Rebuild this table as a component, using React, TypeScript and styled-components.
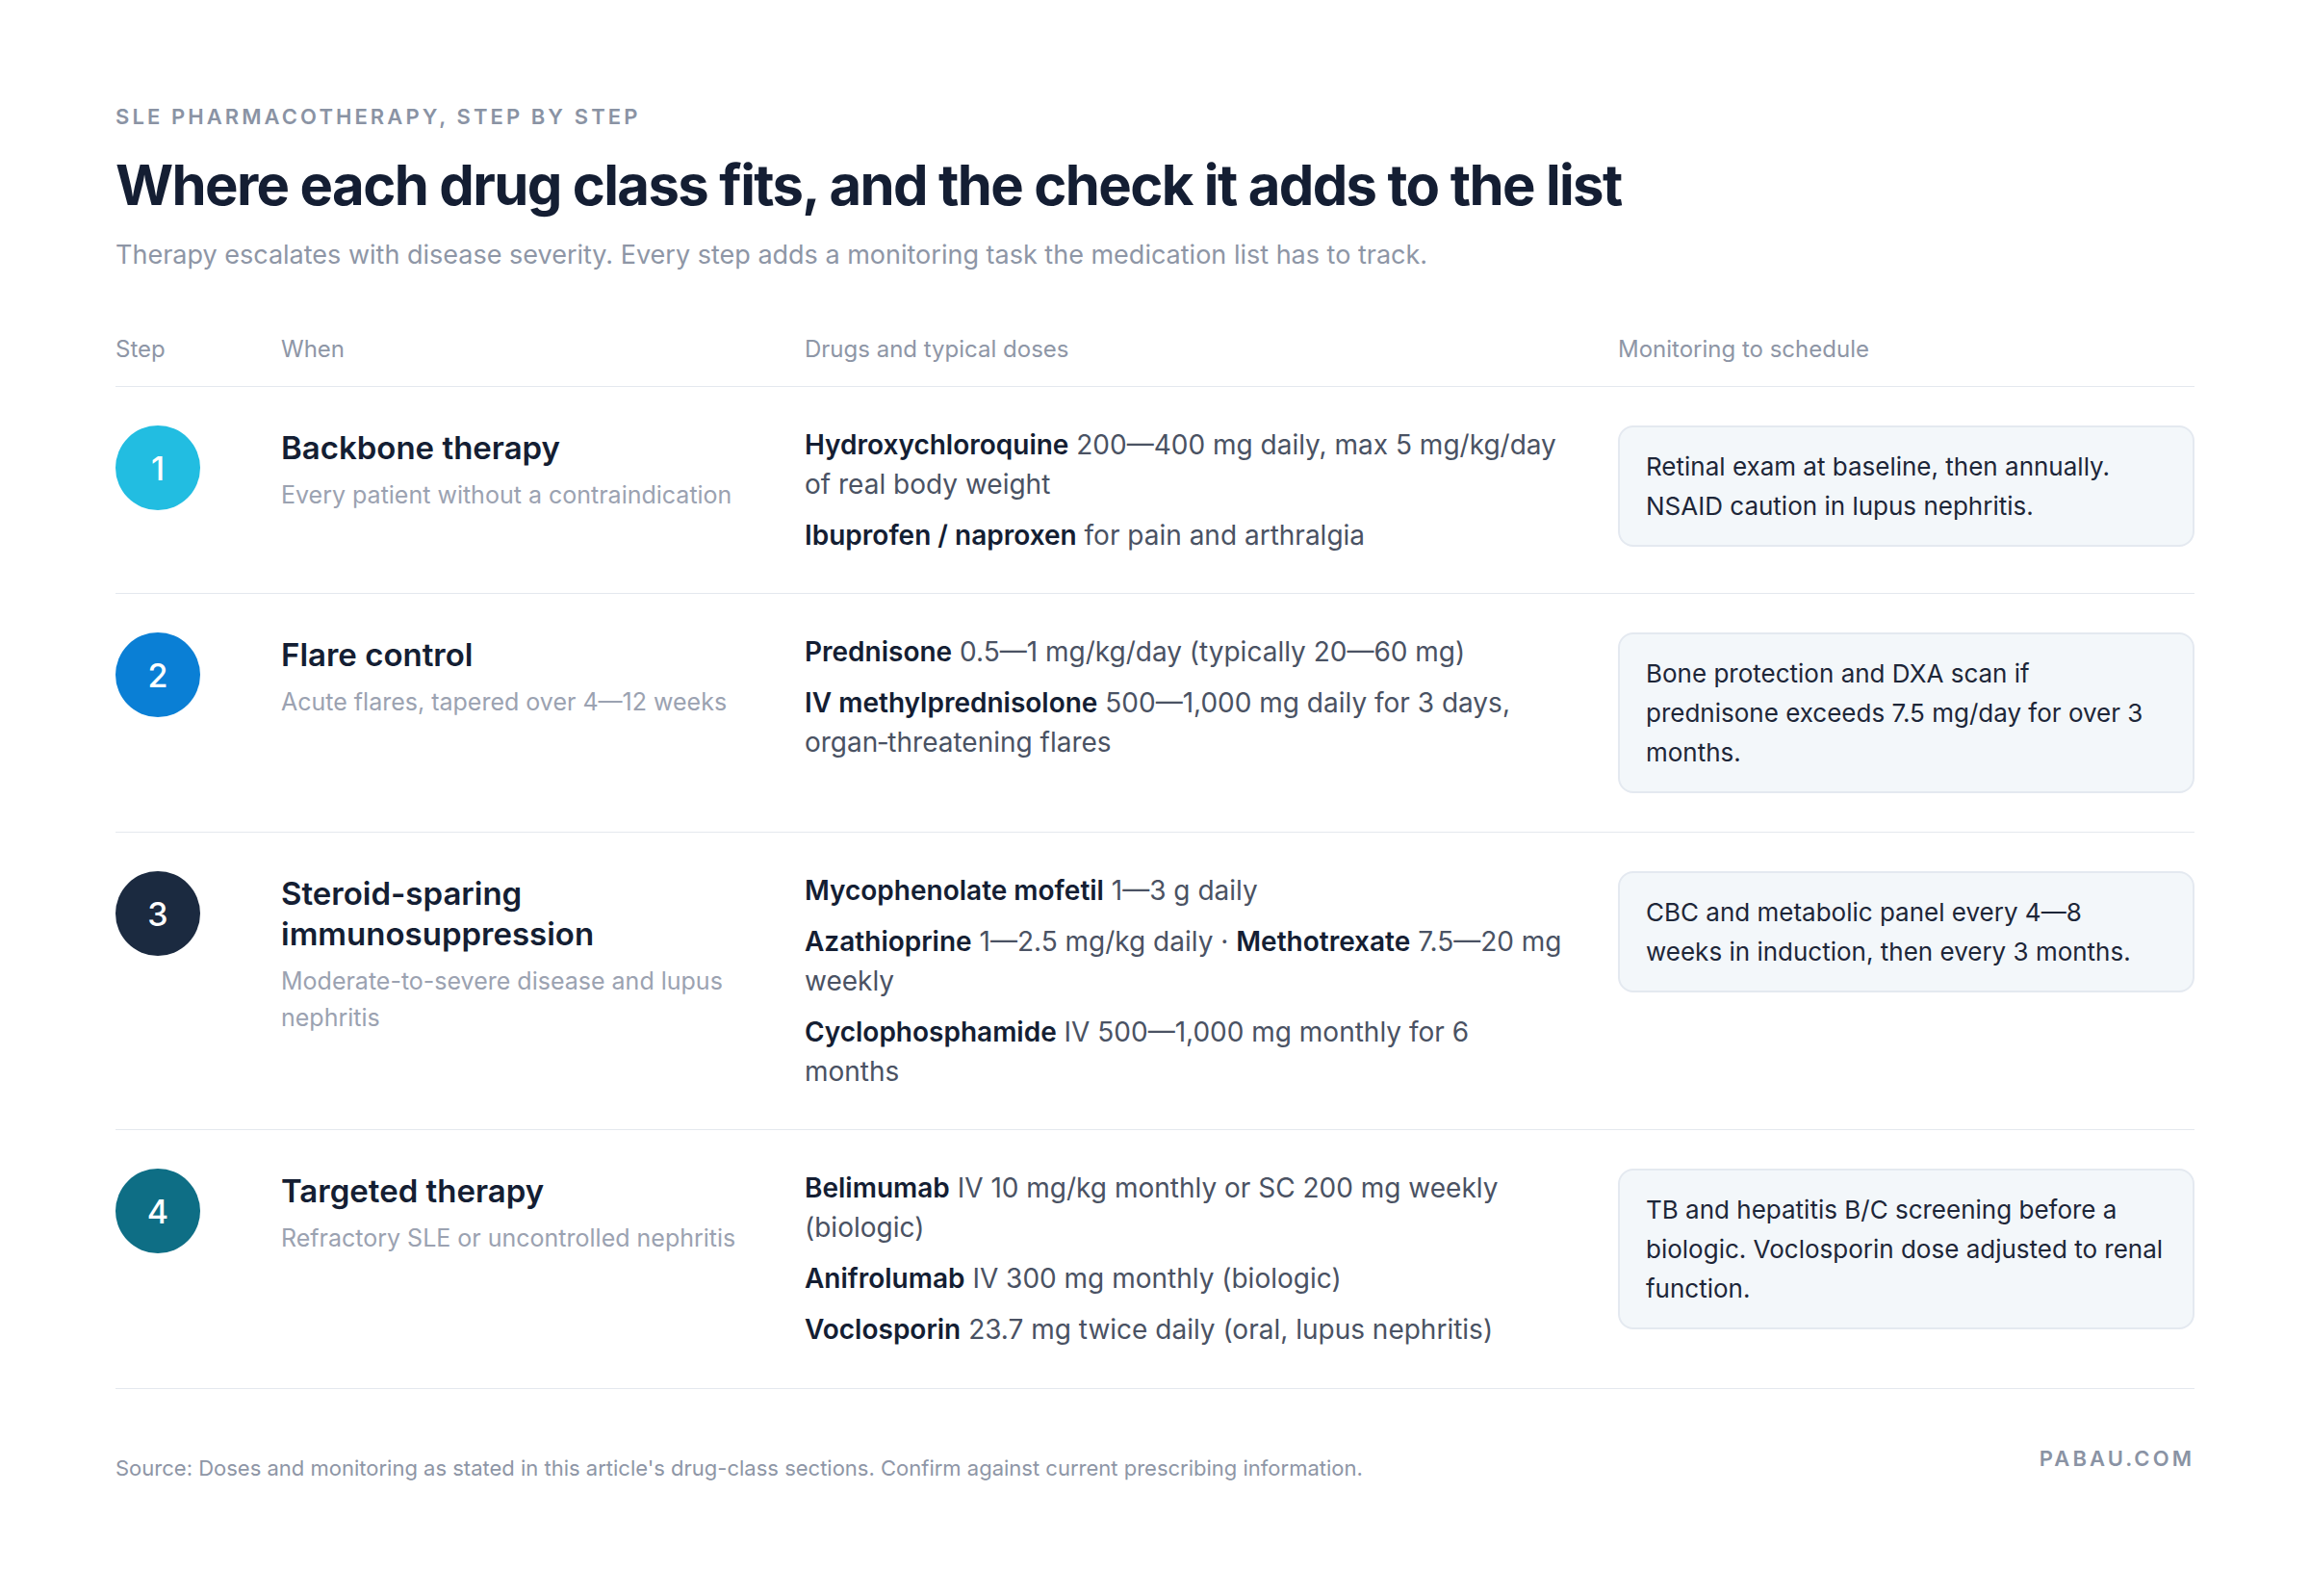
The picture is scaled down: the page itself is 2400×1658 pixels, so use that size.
import React from "react";
import styled, { createGlobalStyle } from "styled-components";

const GlobalStyle = createGlobalStyle`
  html, body { margin: 0; padding: 0; background: #ffffff; }
  body { font-family: Inter, "Noto Sans", sans-serif; -webkit-font-smoothing: antialiased; }
  * { box-sizing: border-box; }
`;

const Page = styled.main`
  width: 2400px;
  min-height: 1658px;
  padding: 107px 120px 0;
  background: #ffffff;
  color: #141e33;
`;

const Eyebrow = styled.div`
  font-size: 22px;
  line-height: 28px;
  font-weight: 600;
  letter-spacing: 0.14em;
  text-transform: uppercase;
  color: #8a93a4;
`;

const Title = styled.h1`
  margin: 23px 0 0;
  font-size: 58px;
  line-height: 68px;
  font-weight: 700;
  letter-spacing: -0.028em;
  color: #141e33;
`;

const Subtitle = styled.p`
  margin: 20px 0 0;
  font-size: 27px;
  line-height: 38px;
  font-weight: 400;
  color: #8e96a6;
`;

const Table = styled.section`
  margin-top: 63px;
`;

const Grid = styled.div`
  display: grid;
  grid-template-columns: 172px 544px 845px 1fr;
  border-bottom: 1px solid #e4e8ee;
`;

const HeadRow = styled(Grid)`
  padding-bottom: 22px;
`;

const HeadCell = styled.div`
  font-size: 24px;
  line-height: 32px;
  color: #8e96a6;
`;

const Row = styled(Grid)`
  padding: 40px 0;
  align-items: start;
`;

const Badge = styled.div<{ $bg: string }>`
  width: 88px;
  height: 88px;
  border-radius: 50%;
  background: ${(p) => p.$bg};
  color: #ffffff;
  display: flex;
  align-items: center;
  justify-content: center;
  font-size: 34px;
  font-weight: 500;
`;

const When = styled.div`
  padding-right: 44px;
  padding-top: 2px;
`;

const StepTitle = styled.h2`
  margin: 0;
  font-size: 33px;
  line-height: 42px;
  font-weight: 600;
  color: #141e33;
`;

const StepNote = styled.p`
  margin: 9px 0 0;
  font-size: 25px;
  line-height: 38px;
  font-weight: 400;
  color: #9ba2b1;
`;

const Drugs = styled.div`
  max-width: 790px;
  display: flex;
  flex-direction: column;
  gap: 12px;
`;

const DrugLine = styled.p`
  margin: 0;
  font-size: 28px;
  line-height: 40.8px;
  color: #4a5263;
`;

const DrugName = styled.strong`
  font-weight: 600;
  color: #141e33;
`;

const Monitor = styled.div<{ $balance?: boolean }>`
  background: #f3f7fa;
  border: 2px solid #e4e9f0;
  border-radius: 16px;
  padding: 20px 27px;
  font-size: 26px;
  line-height: 41px;
  color: #1d2638;
  text-wrap: ${(p) => (p.$balance ? "balance" : "wrap")};
`;

const Footer = styled.footer`
  display: flex;
  justify-content: space-between;
  align-items: flex-start;
  padding-top: 57px;
`;

const Source = styled.p`
  margin: 10px 0 0;
  font-size: 22px;
  line-height: 30px;
  color: #8e96a6;
`;

const Brand = styled.div`
  font-size: 22px;
  line-height: 30px;
  font-weight: 600;
  letter-spacing: 0.14em;
  color: #8a93a4;
`;

type Drug = { name: string; rest: React.ReactNode };
type Step = {
  n: number;
  color: string;
  title: string;
  note: string;
  drugs: Drug[][];
  monitor: string;
  balance?: boolean;
};

const steps: Step[] = [
  {
    n: 1,
    color: "#22bde1",
    title: "Backbone therapy",
    note: "Every patient without a contraindication",
    drugs: [
      [{ name: "Hydroxychloroquine", rest: " 200—400 mg daily, max 5 mg/kg/day of real body weight" }],
      [{ name: "Ibuprofen / naproxen", rest: " for pain and arthralgia" }],
    ],
    monitor: "Retinal exam at baseline, then annually. NSAID caution in lupus nephritis.",
  },
  {
    n: 2,
    color: "#0a7fd5",
    title: "Flare control",
    note: "Acute flares, tapered over 4—12 weeks",
    drugs: [
      [{ name: "Prednisone", rest: " 0.5—1 mg/kg/day (typically 20—60 mg)" }],
      [{ name: "IV methylprednisolone", rest: " 500—1,000 mg daily for 3 days, organ\u2011threatening flares" }],
    ],
    monitor: "Bone protection and DXA scan if prednisone exceeds 7.5 mg/day for over 3 months.",
  },
  {
    n: 3,
    color: "#1b2a40",
    title: "Steroid-sparing immunosuppression",
    note: "Moderate-to-severe disease and lupus nephritis",
    drugs: [
      [{ name: "Mycophenolate mofetil", rest: " 1—3 g daily" }],
      [
        { name: "Azathioprine", rest: " 1—2.5 mg/kg daily · " },
        { name: "Methotrexate", rest: " 7.5—20 mg weekly" },
      ],
      [{ name: "Cyclophosphamide", rest: " IV 500—1,000 mg monthly for 6 months" }],
    ],
    monitor: "CBC and metabolic panel every 4—8 weeks in induction, then every 3 months.",
    balance: true,
  },
  {
    n: 4,
    color: "#0e6e85",
    title: "Targeted therapy",
    note: "Refractory SLE or uncontrolled nephritis",
    drugs: [
      [{ name: "Belimumab", rest: " IV 10 mg/kg monthly or SC 200 mg weekly (biologic)" }],
      [{ name: "Anifrolumab", rest: " IV 300 mg monthly (biologic)" }],
      [{ name: "Voclosporin", rest: " 23.7 mg twice daily (oral, lupus nephritis)" }],
    ],
    monitor: "TB and hepatitis B/C screening before a biologic. Voclosporin dose adjusted to renal function.",
  },
];

export default function App() {
  return (
    <>
      <GlobalStyle />
      <Page>
        <Eyebrow>SLE pharmacotherapy, step by step</Eyebrow>
        <Title>Where each drug class fits, and the check it adds to the list</Title>
        <Subtitle>
          Therapy escalates with disease severity. Every step adds a monitoring task the medication list has to track.
        </Subtitle>
        <Table>
          <HeadRow>
            <HeadCell>Step</HeadCell>
            <HeadCell>When</HeadCell>
            <HeadCell>Drugs and typical doses</HeadCell>
            <HeadCell>Monitoring to schedule</HeadCell>
          </HeadRow>
          {steps.map((s) => (
            <Row key={s.n}>
              <Badge $bg={s.color}>{s.n}</Badge>
              <When>
                <StepTitle>{s.title}</StepTitle>
                <StepNote>{s.note}</StepNote>
              </When>
              <Drugs>
                {s.drugs.map((line, i) => (
                  <DrugLine key={i}>
                    {line.map((d) => (
                      <React.Fragment key={d.name}>
                        <DrugName>{d.name}</DrugName>
                        {d.rest}
                      </React.Fragment>
                    ))}
                  </DrugLine>
                ))}
              </Drugs>
              <Monitor $balance={s.balance}>{s.monitor}</Monitor>
            </Row>
          ))}
        </Table>
        <Footer>
          <Source>
            Source: Doses and monitoring as stated in this article's drug-class sections. Confirm against current prescribing information.
          </Source>
          <Brand>PABAU.COM</Brand>
        </Footer>
      </Page>
    </>
  );
}
